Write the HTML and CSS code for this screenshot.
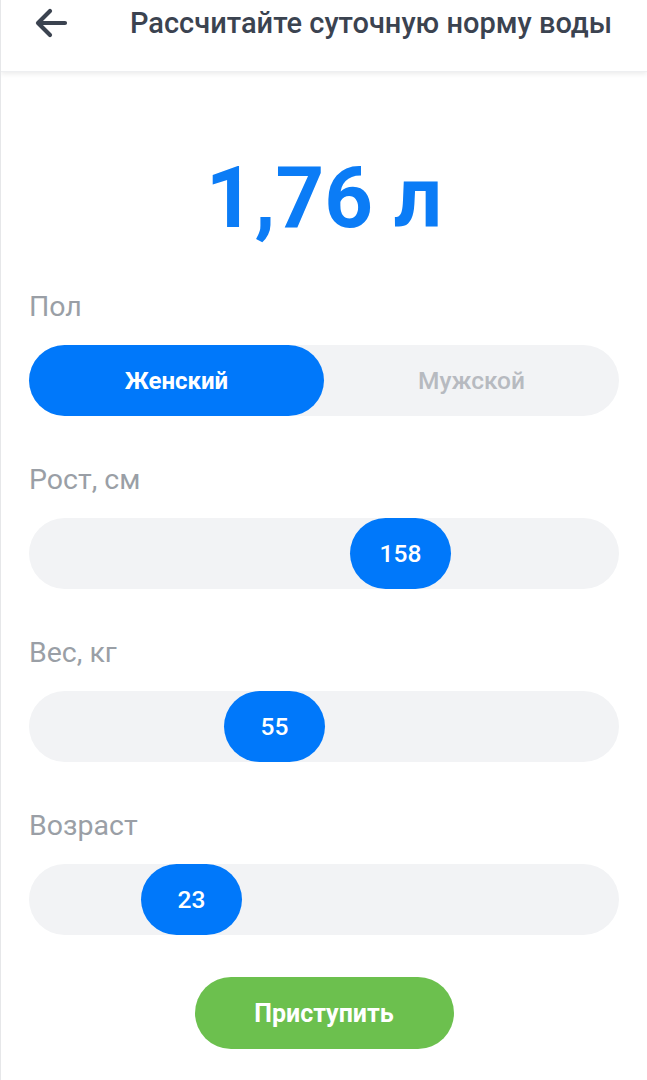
FILE: index.html
```html
<!DOCTYPE html>
<html>
	<head>
		<meta charset="UTF-8">
		<title>Норма воды</title>
		<link rel="stylesheet" href="styles.css">
	</head>
	<body>
		<div class="header">
			<svg class="back" width="34" height="30" viewBox="0 0 34 30">
				<path d="M31 15H5M16 3L4 15l12 12" fill="none" stroke="#3b4350" stroke-width="4.2" stroke-linecap="round" stroke-linejoin="round"/>
			</svg>
			<h1 class="title">Рассчитайте суточную норму воды</h1>
		</div>
		<div class="content">
			<div class="result">1,76 л</div>

			<div class="label">Пол</div>
			<div class="toggle">
				<div class="opt active">Женский</div>
				<div class="opt">Мужской</div>
			</div>

			<div class="label">Рост, см</div>
			<div class="track">
				<div class="thumb" style="margin-left: 321px">158</div>
			</div>

			<div class="label">Вес, кг</div>
			<div class="track">
				<div class="thumb" style="margin-left: 195px">55</div>
			</div>

			<div class="label">Возраст</div>
			<div class="track">
				<div class="thumb" style="margin-left: 112px">23</div>
			</div>

			<div class="btn-row">
				<div class="btn">Приступить</div>
			</div>
		</div>
	</body>
</html>
```

FILE: styles.css
```css
*{
	margin: 0;
	padding: 0;
	box-sizing: border-box;
}
body{
	font-family: Roboto, "Noto Sans", sans-serif;
	background: #fff;
	width: 647px;
	height: 1080px;
	overflow: hidden;
	border-left: 1px solid #e6e7e9;
}
.header{
	height: 72px;
	display: flex;
	align-items: center;
	padding-left: 33px;
	padding-bottom: 26px;
	box-shadow: 0 2px 5px rgba(0,0,0,0.08);
	border-bottom: 1px solid #eeeff1;
}
.back{
	display: block;
}
.title{
	margin-left: 62px;
	font-size: 29px;
	font-weight: 500;
	color: #3b4350;
	white-space: nowrap;
}
.content{
	padding: 0 28px;
}
.result{
	text-align: center;
	font-size: 85px;
	font-weight: 700;
	color: #0b7cf6;
	margin-top: 76px;
	line-height: 100px;
	height: 100px;
}
.label{
	font-size: 28.5px;
	color: #9a9fa6;
	margin-top: 48px;
	height: 32px;
	line-height: 32px;
}
.result + .label{
	margin-top: 43px;
}
.toggle, .track{
	margin-top: 22px;
	height: 71px;
	border-radius: 36px;
	background: #f2f3f5;
	display: flex;
}
.toggle .opt{
	flex: 1;
	display: flex;
	align-items: center;
	justify-content: center;
	font-size: 24.5px;
	font-weight: 500;
	color: #b7bac0;
	border-radius: 36px;
}
.toggle .active{
	background: #0078fa;
	color: #fff;
	font-weight: 700;
	font-size: 24px;
}
.track .thumb{
	width: 101px;
	height: 71px;
	border-radius: 36px;
	background: #0078fa;
	color: #fff;
	font-size: 24.5px;
	font-weight: 500;
	display: flex;
	align-items: center;
	justify-content: center;
}
.btn-row{
	display: flex;
	justify-content: center;
	margin-top: 42px;
}
.btn{
	width: 259px;
	height: 72px;
	border-radius: 36px;
	background: #6cc04e;
	color: #fff;
	font-size: 25px;
	font-weight: 700;
	display: flex;
	align-items: center;
	justify-content: center;
}
```
